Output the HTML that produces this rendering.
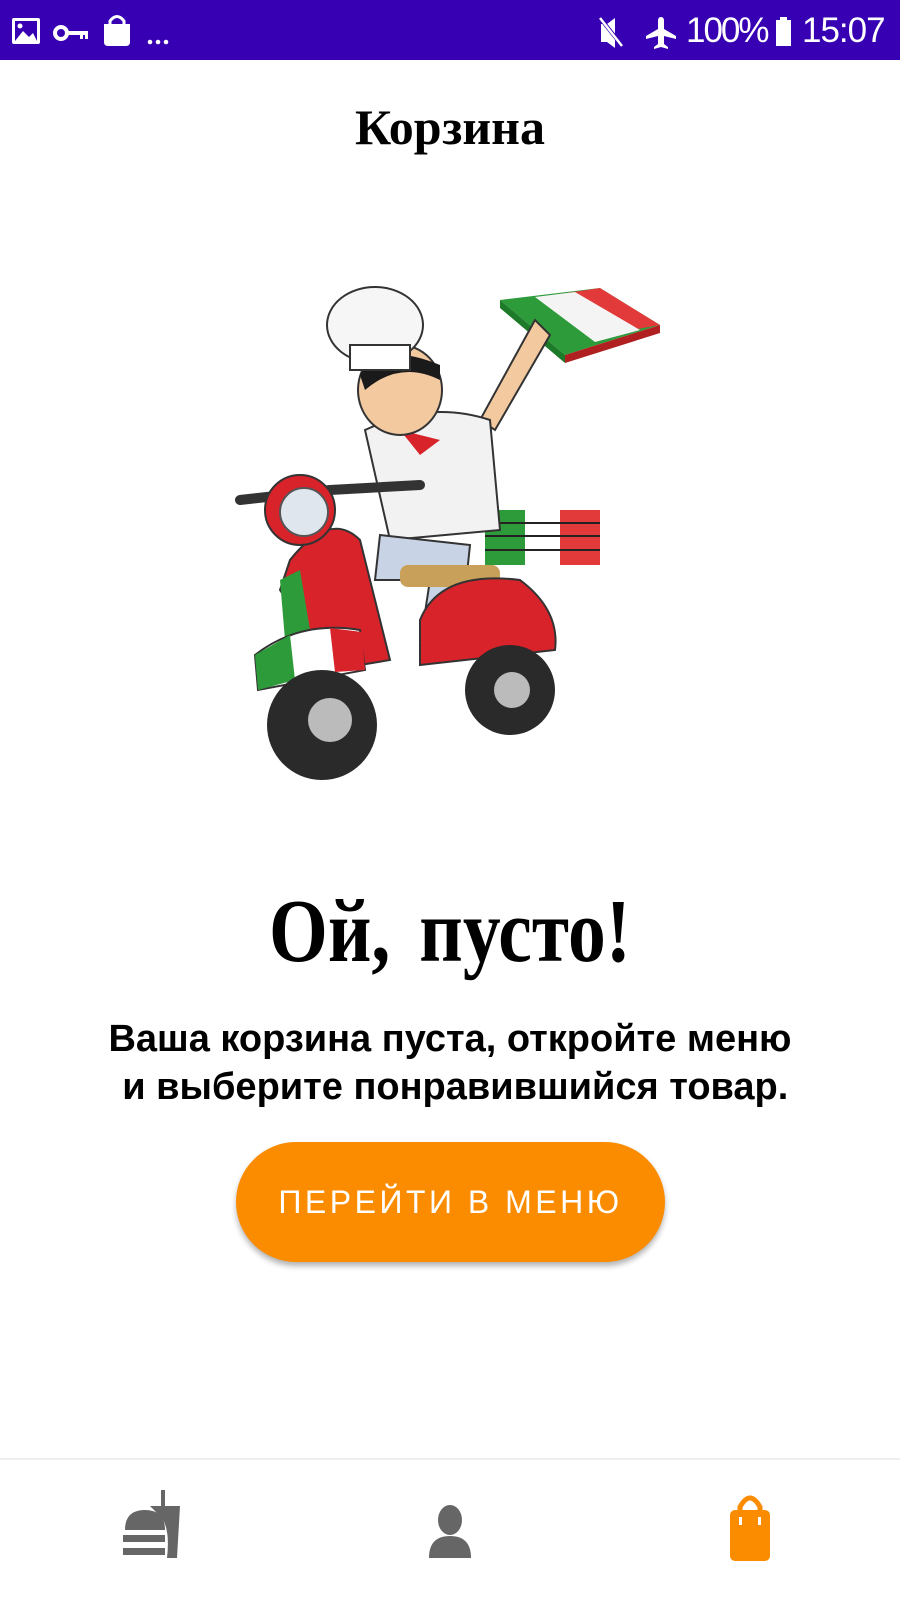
<!DOCTYPE html>
<html><head><meta charset="utf-8"><style>
body{margin:0;width:900px;height:1600px;background:#fff;position:relative;overflow:hidden;font-family:"Liberation Sans",sans-serif}
.sb{position:absolute;left:0;top:0;width:900px;height:60px;background:#3700B3;color:#fff}
.t{position:absolute;width:900px;text-align:center}
</style></head><body>
<div class="sb">
<svg width="900" height="60" style="position:absolute;left:0;top:0">
<rect x="12" y="18" width="28" height="26" rx="2" fill="#fff"/><rect x="15" y="21" width="22" height="20" fill="#3700B3"/><path d="M15 41 L23 31 L29 37 L33 33 L37 41Z" fill="#fff"/><circle cx="20" cy="26" r="2.5" fill="#fff"/>
<circle cx="61" cy="33" r="6" fill="none" stroke="#fff" stroke-width="4"/><rect x="66" y="31" width="22" height="4" fill="#fff"/><rect x="80" y="33" width="3" height="6" fill="#fff"/><rect x="85" y="33" width="3" height="6" fill="#fff"/>
<path d="M104 24 h26 v18 q0 4 -4 4 h-18 q-4 0 -4 -4z" fill="#fff"/><path d="M110 25 v-4 q7 -9 14 0 v4" stroke="#fff" stroke-width="3" fill="none"/>
<circle cx="150" cy="42" r="2.3" fill="#fff"/><circle cx="158" cy="42" r="2.3" fill="#fff"/><circle cx="166" cy="42" r="2.3" fill="#fff"/>
<path d="M601 24 h6 l8 -6 v30 l-8 -6 h-6z" fill="#fff"/><path d="M600 18 L624 48" stroke="#3700B3" stroke-width="4"/><path d="M600 18 L622 46" stroke="#fff" stroke-width="2.5"/>
<path d="M661 17 q3 0 3 4 v8 l12 7 v3 l-12 -3 v8 l4 3 v2 l-7 -2 l-7 2 v-2 l4 -3 v-8 l-12 3 v-3 l12 -7 v-8 q0 -4 3 -4z" fill="#fff"/>
<rect x="776" y="20" width="15" height="26" fill="#fff"/><rect x="780" y="17" width="7" height="4" fill="#fff"/>
</svg>
<div style="position:absolute;left:686px;top:11px;font-size:35px;letter-spacing:-2px">100%</div>
<div style="position:absolute;left:802px;top:11px;font-size:35px;letter-spacing:-1px">15:07</div>
</div>
<div class="t" style="top:98px;font-family:'Liberation Serif',serif;font-weight:bold;font-size:50px">Корзина</div>
<svg width="900" height="520" style="position:absolute;left:0;top:280px" viewBox="0 0 900 520">
<path d="M500 20 L600 8 L660 45 L565 75 Z" fill="#2e9b3a"/><path d="M560 14 L600 8 L660 45 L620 52Z" fill="#e23a3a"/><path d="M535 17 L575 12 L640 50 L595 62Z" fill="#f4f4f4"/><path d="M500 20 L565 75 L565 83 L500 28Z" fill="#1d7a28"/><path d="M565 75 L660 45 L660 53 L565 83Z" fill="#b02020"/>
<path d="M535 40 L480 140 L495 150 L550 55Z" fill="#f3c9a0" stroke="#333" stroke-width="2"/>
<rect x="485" y="230" width="115" height="55" fill="#2e9b3a"/><rect x="525" y="230" width="35" height="55" fill="#fff"/><rect x="560" y="230" width="40" height="55" fill="#e23a3a"/>
<g stroke="#222" stroke-width="2"><line x1="485" y1="243" x2="600" y2="243"/><line x1="485" y1="256" x2="600" y2="256"/><line x1="485" y1="270" x2="600" y2="270"/></g>
<path d="M365 150 Q430 120 490 140 L500 250 L390 260 Z" fill="#f2f2f2" stroke="#333" stroke-width="2"/>
<path d="M400 150 L440 160 L420 175Z" fill="#d8232a"/>
<ellipse cx="400" cy="110" rx="42" ry="45" fill="#f3c9a0" stroke="#333" stroke-width="2"/>
<path d="M360 95 Q380 60 440 85 L440 100 Q400 80 365 110Z" fill="#1a1a1a"/>
<ellipse cx="375" cy="45" rx="48" ry="38" fill="#f6f6f6" stroke="#333" stroke-width="2"/><rect x="350" y="65" width="60" height="25" fill="#fff" stroke="#333" stroke-width="2"/>
<path d="M380 255 L470 265 L460 360 L420 365 L430 300 L375 300Z" fill="#c8d4e6" stroke="#333" stroke-width="2"/>
<ellipse cx="450" cy="368" rx="25" ry="10" fill="#eee" stroke="#333" stroke-width="2"/>
<rect x="400" y="285" width="100" height="22" rx="8" fill="#c9a05a"/>
<path d="M240 220 L330 210 L420 205" stroke="#333" stroke-width="10" fill="none" stroke-linecap="round"/>
<path d="M290 280 Q330 230 360 260 L390 380 L330 390 Q300 340 280 310Z" fill="#d8232a" stroke="#333" stroke-width="2"/>
<path d="M280 300 L300 290 L310 350 L285 360Z" fill="#2e9b3a"/>
<circle cx="300" cy="230" r="35" fill="#d8232a" stroke="#333" stroke-width="2"/><circle cx="304" cy="232" r="24" fill="#dfe6ee" stroke="#555" stroke-width="2"/>
<path d="M420 340 Q440 290 520 300 Q560 330 555 370 L420 385Z" fill="#d8232a" stroke="#333" stroke-width="2"/>
<circle cx="510" cy="410" r="45" fill="#2a2a2a"/><circle cx="512" cy="410" r="18" fill="#bbb"/>
<path d="M255 375 Q300 340 360 350 L365 390 L258 410Z" fill="#fff" stroke="#333" stroke-width="2"/><path d="M255 375 L290 355 L295 400 L258 410Z" fill="#2e9b3a"/><path d="M330 348 L362 352 L365 390 L335 392Z" fill="#d8232a"/>
<circle cx="322" cy="445" r="55" fill="#2a2a2a"/><circle cx="330" cy="440" r="22" fill="#bbb"/>
</svg>
<div class="t" style="top:880px;font-family:'Liberation Serif',serif;font-weight:bold;font-size:90px;transform:scaleX(0.84);word-spacing:12px">Ой, пусто!</div>
<div class="t" style="top:1015px;font-weight:bold;font-size:38px;line-height:48px">Ваша корзина пуста, откройте меню<br>&nbsp;и выберите понравившийся товар.</div>
<div style="position:absolute;left:236px;top:1142px;width:429px;height:120px;border-radius:60px;background:#FB8C00;box-shadow:0 4px 6px rgba(0,0,0,.3);color:#fff;font-size:32px;letter-spacing:3.5px;text-align:center;line-height:120px">ПЕРЕЙТИ В МЕНЮ</div>
<div style="position:absolute;left:0;top:1458px;width:900px;height:2px;background:#eee"></div>
<svg width="900" height="130" style="position:absolute;left:0;top:1470px">
<path d="M125 60 q0 -20 20 -20 q20 0 20 20z" fill="#666"/><rect x="123" y="65" width="42" height="7" fill="#666"/><rect x="123" y="78" width="42" height="7" fill="#666"/>
<rect x="161" y="20" width="4" height="20" fill="#666"/><path d="M150 36 h30 l-3 52 h-10 q4 -35 -10 -45z" fill="#666"/>
<ellipse cx="450" cy="50" rx="12" ry="15" fill="#666"/><path d="M429 88 q0 -22 21 -22 q21 0 21 22z" fill="#666"/>
<rect x="730" y="40" width="40" height="51" rx="5" fill="#FB8C00"/><path d="M740 45 v-8 q10 -18 20 0 v8" stroke="#FB8C00" stroke-width="5" fill="none"/><rect x="739" y="47" width="3" height="8" fill="#fff"/><rect x="758" y="47" width="3" height="8" fill="#fff"/>
</svg>
</body></html>
